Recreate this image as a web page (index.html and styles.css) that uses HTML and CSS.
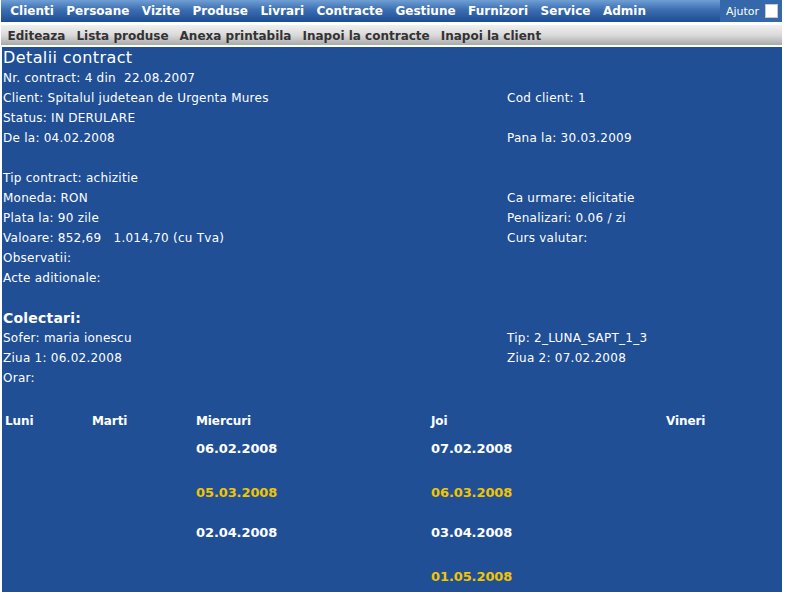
FILE: index.html
```html
<!DOCTYPE html>
<html lang="ro">
<head>
  <meta charset="UTF-8">
  <title>Detalii contract</title>
  <link rel="stylesheet" href="styles.css">
</head>
<body>
  <div class="page">
    <div class="topnav">
      <ul class="menu">
        <li>Clienti</li>
        <li>Persoane</li>
        <li>Vizite</li>
        <li>Produse</li>
        <li>Livrari</li>
        <li>Contracte</li>
        <li>Gestiune</li>
        <li>Furnizori</li>
        <li>Service</li>
        <li>Admin</li>
      </ul>
      <label class="help">Ajutor <span class="box"></span></label>
    </div>

    <div class="subnav">
      <span>Editeaza</span>
      <span>Lista produse</span>
      <span>Anexa printabila</span>
      <span>Inapoi la contracte</span>
      <span>Inapoi la client</span>
    </div>

    <div class="content">
      <h1>Detalii contract</h1>
      <div class="info">
        <div>Nr. contract: 4 din &nbsp;22.08.2007</div><div></div>
        <div>Client: Spitalul judetean de Urgenta Mures</div><div>Cod client: 1</div>
        <div>Status: IN DERULARE</div><div></div>
        <div>De la: 04.02.2008</div><div>Pana la: 30.03.2009</div>
        <div>&nbsp;</div><div></div>
        <div>Tip contract: achizitie</div><div></div>
        <div>Moneda: RON</div><div>Ca urmare: elicitatie</div>
        <div>Plata la: 90 zile</div><div>Penalizari: 0.06 / zi</div>
        <div>Valoare: 852,69 &nbsp; 1.014,70 (cu Tva)</div><div>Curs valutar:</div>
        <div>Observatii:</div><div></div>
        <div>Acte aditionale:</div><div></div>
        <div>&nbsp;</div><div></div>
      </div>

      <h2>Colectari:</h2>
      <div class="info">
        <div>Sofer: maria ionescu</div><div>Tip: 2_LUNA_SAPT_1_3</div>
        <div>Ziua 1: 06.02.2008</div><div>Ziua 2: 07.02.2008</div>
        <div>Orar:</div><div></div>
      </div>

      <div class="week">
        <div class="day">Luni</div>
        <div class="day">Marti</div>
        <div class="day">Miercuri</div>
        <div class="day">Joi</div>
        <div class="day">Vineri</div>

        <div></div><div></div>
        <div class="date r1">06.02.2008</div>
        <div class="date r1">07.02.2008</div>
        <div></div>

        <div></div><div></div>
        <div class="date r2 alt">05.03.2008</div>
        <div class="date r2 alt">06.03.2008</div>
        <div></div>

        <div></div><div></div>
        <div class="date r3">02.04.2008</div>
        <div class="date r3">03.04.2008</div>
        <div></div>

        <div></div><div></div>
        <div class="date r4"></div>
        <div class="date r4 alt">01.05.2008</div>
        <div></div>
      </div>
    </div>
  </div>
</body>
</html>
```

FILE: styles.css
```css
body {
  margin: 0;
  background-color: white;
  font-family: "DejaVu Sans", Verdana, sans-serif;
  font-size: 12px;
}
.page {
  width: 781px;
  margin-left: 1px;
}
.topnav {
  height: 22px;
  display: flex;
  align-items: center;
  justify-content: space-between;
  background: linear-gradient(#6f9fd3, #3c6db0 45%, #1d4c95);
  color: white;
}
.menu {
  list-style: none;
  margin: 0;
  padding: 0 0 0 3px;
  display: flex;
}
.menu li {
  font-weight: bold;
  padding: 0 6.25px;
}
.help {
  display: flex;
  align-items: center;
  gap: 6px;
  height: 22px;
  padding: 0 4px 0 6px;
  font-size: 11px;
  background-color: #3567ab;
}
.help .box {
  width: 11px;
  height: 12px;
  background-color: white;
  border: 1px solid #c8c8c8;
}
.subnav {
  height: 20px;
  margin-top: 3px;
  display: flex;
  align-items: center;
  padding: 1px 0 0 1px;
  box-sizing: border-box;
  background: linear-gradient(#f0f0f0, #dadada 50%, #a9a9a9);
  color: #333;
  font-weight: bold;
}
.subnav span {
  padding: 0 5.5px;
}
.content {
  margin: 2px 0 0 1px;
  padding: 1px 3px 0 1px;
  background-color: #204f95;
  color: white;
  min-height: 546px;
  box-sizing: border-box;
  letter-spacing: 0.25px;
}
h1 {
  margin: 0;
  font-size: 16px;
  font-weight: normal;
  line-height: 20px;
  letter-spacing: 0.4px;
}
h2 {
  margin: 0;
  font-size: 14px;
  line-height: 20px;
  letter-spacing: 0.2px;
}
.info {
  display: grid;
  grid-template-columns: 504px 1fr;
  line-height: 20px;
}
.week {
  display: grid;
  grid-template-columns: 87px 104px 235px 235px 1fr;
  margin-top: 23px;
  padding-left: 2px;
  font-weight: bold;
  line-height: 20px;
  letter-spacing: -0.1px;
}
.day {
  font-size: 12px;
}
.date {
  font-size: 13px;
}
.date.r1 { margin-top: 8px; }
.date.r2 { margin-top: 24px; }
.date.r3 { margin-top: 20px; }
.date.r4 { margin-top: 24px; }
.date.alt {
  color: #f2c500;
}
```
